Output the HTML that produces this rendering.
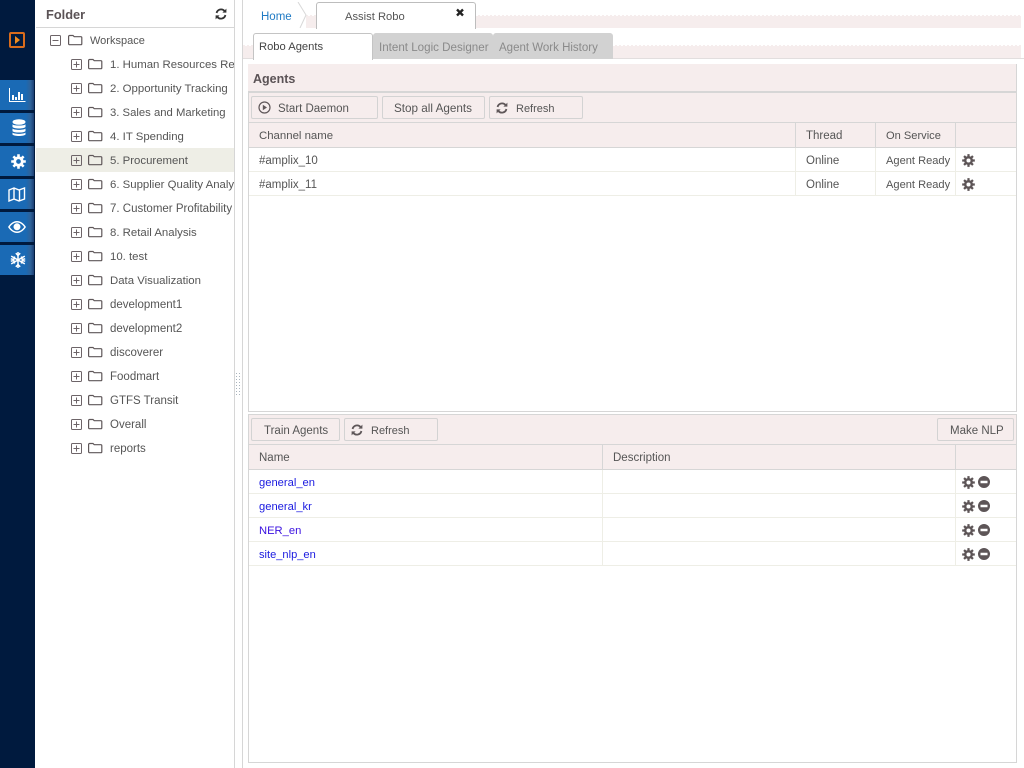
<!DOCTYPE html>
<html><head><meta charset="utf-8"><style>
html,body{margin:0;padding:0;background:#fff}
#r{position:relative;width:1024px;height:768px;overflow:hidden;font-family:"Liberation Sans",sans-serif;font-size:12px;color:#555;background:#fff}
#r div,#r svg,#r span{position:absolute}
.t{white-space:nowrap;line-height:16px;margin-top:1px}
.b{background:#f6eded;border:1px solid #d3d3d3;border-radius:2px;box-sizing:border-box;height:23px}
.nav{left:0;width:34px;height:30px;background:linear-gradient(90deg,#1a6ab5 0,#1a6ab5 76%,#2f6299 90%,#1c3f73 100%)}
.l{background:#eeeee6}
.a{color:#1a1ae0}
.tr .t{font-size:11.4px}
.tr svg[width="11"]{margin-left:1px}
.d{height:1px;background:repeating-linear-gradient(90deg,#f6eded 0 2px,transparent 2px 4px)}
</style></head><body><div id="r">
<svg width="0" height="0" style="position:absolute">
<defs>
<symbol id="g" viewBox="0 0 14 14"><circle cx="7" cy="7" r="3.500" fill="none" stroke="currentColor" stroke-width="2.600"/><path fill="none" stroke="currentColor" stroke-width="2.400" d="M7 .2v3M7 10.800v3M.2 7h3M10.800 7h3M2.200 2.200l2.200 2.200M9.600 9.600l2.200 2.200M11.800 2.200L9.600 4.400M4.400 9.600l-2.200 2.200"/></symbol>
<symbol id="m" viewBox="0 0 12 12"><path fill="#5d5557" fill-rule="evenodd" d="M6 0a6 6 0 1 1 0 12A6 6 0 0 1 6 0zM2.500 4.800v2.400h7V4.800z"/></symbol>
<symbol id="re" viewBox="0 0 12 12"><path fill="none" stroke="currentColor" stroke-width="1.800" d="M1.600 5A4.600 4.600 0 0 1 9.600 3M10.400 7A4.600 4.600 0 0 1 2.400 9"/><path fill="currentColor" d="M11.400.6v4H7.400zM.6 11.400v-4h4z"/></symbol>
<symbol id="plus" viewBox="0 0 11 11"><rect x=".5" y=".5" width="10" height="10" rx="1" fill="none" stroke="#6d6468"/><path d="M2.500 5.500h6M5.500 2.500v6" stroke="#6d6468"/></symbol>
<symbol id="minus" viewBox="0 0 11 11"><rect x=".5" y=".5" width="10" height="10" rx="1" fill="none" stroke="#6d6468"/><path d="M2.500 5.500h6" stroke="#6d6468"/></symbol>
<symbol id="f" viewBox="0 0 15 12"><path fill="none" stroke="#5f5759" stroke-width="1.200" d="M1.600 1.500h3.400l1.200 1.200h6.600a1 1 0 0 1 1 1v6a1 1 0 0 1-1 1H1.600a1 1 0 0 1-1-1V2.500a1 1 0 0 1 1-1z"/></symbol>
</defs></svg>

<!-- left rail -->
<div style="left:0;top:0;width:35px;height:768px;background:#001a3e"></div>
<div style="left:9px;top:32px;width:16px;height:16px;box-sizing:border-box;border:2px solid #d96c1c;border-radius:2px"></div>
<svg style="left:15px;top:36px" width="6" height="8"><path d="M0 0l5 4-5 4z" fill="#ef8a1e"/></svg>
<div class="nav" style="top:80px"></div>
<div class="nav" style="top:113px"></div>
<div class="nav" style="top:146px"></div>
<div class="nav" style="top:179px"></div>
<div class="nav" style="top:212px"></div>
<div class="nav" style="top:245px"></div>
<svg style="left:9px;top:88px" width="17" height="14"><path d="M.5 0v13.500H16.500" fill="none" stroke="#fff"/><path d="M3 7h2v5H3zM6 9h2v3H6zM9 4h2v8H9zM12 6h2v6h-2z" fill="#fff"/></svg>
<svg style="left:12px;top:119px" width="14" height="18"><g fill="#fff"><ellipse cx="7" cy="3" rx="6.500" ry="2.800"/><path d="M.5 5.200C2 7 12 7 13.500 5.200V8C12 10 2 10 .5 8zM.5 9.500C2 11.300 12 11.300 13.500 9.500v2.600C12 14 2 14 .5 12.100zM.5 13.500C2 15.300 12 15.300 13.500 13.500V15.500C12 17.500 2 17.500.5 15.500z"/></g></svg>
<svg style="left:11px;top:154px;color:#fff" width="15" height="15"><use href="#g" width="15" height="15"/></svg>
<svg style="left:8px;top:187px" width="18" height="15"><path d="M1 3l5-2 5 2 5.500-2v11l-5.500 2-5-2-5 2zM6 1v11M11.500 3v11" fill="none" stroke="#fff" stroke-width="1.400"/></svg>
<svg style="left:8px;top:221px" width="18" height="12"><path fill="#fff" fill-rule="evenodd" d="M9 0c4 0 7 3 9 6-2 3-5 6-9 6s-7-3-9-6c2-3 5-6 9-6zM9 1.500C6 1.500 3.500 3.500 1.800 6 3.500 8.500 6 10.500 9 10.500s5.500-2 7.200-4.500C14.500 3.500 12 1.500 9 1.500z"/><circle cx="9" cy="5.800" r="3.500" fill="#fff"/></svg>
<svg style="left:10px;top:252px" width="16" height="16"><g stroke="#fff" stroke-width="1.500" fill="none"><path d="M8 0v16M1.200 4.100l13.600 7.800M14.800 4.100L1.200 11.900"/><path d="M5.800 1.200L8 3.400l2.200-2.200M5.800 14.800L8 12.600l2.200 2.200M.8 6.800l3 .7.800-3M15.200 6.800l-3 .7-.8-3M.8 9.200l3-.7.800 3M15.200 9.200l-3-.7-.8 3"/></g></svg>

<!-- folder panel -->
<div style="left:234px;top:0;width:1px;height:768px;background:#d6d6d6"></div>
<div style="left:36px;top:27px;width:198px;height:1px;background:#d6d6d6"></div>
<div class="t" style="left:46px;top:6px;font-weight:bold;font-size:12.800px;color:#5b5356">Folder</div>
<svg style="left:215px;top:8px;color:#333" width="12" height="12"><use href="#re" width="12" height="12"/></svg>
<div style="left:36px;top:148px;width:198px;height:24px;background:#eeeee6"></div>

<svg style="left:50px;top:35px" width="11" height="11"><use href="#minus" width="11" height="11"/></svg>
<svg style="left:68px;top:34px" width="15" height="12"><use href="#f" width="15" height="12"/></svg>
<div class="t" style="left:90px;top:32px;font-size:11px">Workspace</div>

<div class="tr" style="left:70px;top:52px;width:164px;height:408px;overflow:hidden">
<svg style="left:0;top:7px" width="11" height="11"><use href="#plus" width="11" height="11"/></svg><svg style="left:18px;top:6px" width="15" height="12"><use href="#f" width="15" height="12"/></svg><div class="t" style="left:40px;top:4px">1. Human Resources Report</div>
<svg style="left:0;top:31px" width="11" height="11"><use href="#plus" width="11" height="11"/></svg><svg style="left:18px;top:30px" width="15" height="12"><use href="#f" width="15" height="12"/></svg><div class="t" style="left:40px;top:28px">2. Opportunity Tracking</div>
<svg style="left:0;top:55px" width="11" height="11"><use href="#plus" width="11" height="11"/></svg><svg style="left:18px;top:54px" width="15" height="12"><use href="#f" width="15" height="12"/></svg><div class="t" style="left:40px;top:52px;font-size:11.300px">3. Sales and Marketing</div>
<svg style="left:0;top:79px" width="11" height="11"><use href="#plus" width="11" height="11"/></svg><svg style="left:18px;top:78px" width="15" height="12"><use href="#f" width="15" height="12"/></svg><div class="t" style="left:40px;top:76px">4. IT Spending</div>
<svg style="left:0;top:103px" width="11" height="11"><use href="#plus" width="11" height="11"/></svg><svg style="left:18px;top:102px" width="15" height="12"><use href="#f" width="15" height="12"/></svg><div class="t" style="left:40px;top:100px">5. Procurement</div>
<svg style="left:0;top:127px" width="11" height="11"><use href="#plus" width="11" height="11"/></svg><svg style="left:18px;top:126px" width="15" height="12"><use href="#f" width="15" height="12"/></svg><div class="t" style="left:40px;top:124px">6. Supplier Quality Analysis</div>
<svg style="left:0;top:151px" width="11" height="11"><use href="#plus" width="11" height="11"/></svg><svg style="left:18px;top:150px" width="15" height="12"><use href="#f" width="15" height="12"/></svg><div class="t" style="left:40px;top:148px;font-size:11.500px">7. Customer Profitability</div>
<svg style="left:0;top:175px" width="11" height="11"><use href="#plus" width="11" height="11"/></svg><svg style="left:18px;top:174px" width="15" height="12"><use href="#f" width="15" height="12"/></svg><div class="t" style="left:40px;top:172px">8. Retail Analysis</div>
<svg style="left:0;top:199px" width="11" height="11"><use href="#plus" width="11" height="11"/></svg><svg style="left:18px;top:198px" width="15" height="12"><use href="#f" width="15" height="12"/></svg><div class="t" style="left:40px;top:196px">10. test</div>
<svg style="left:0;top:223px" width="11" height="11"><use href="#plus" width="11" height="11"/></svg><svg style="left:18px;top:222px" width="15" height="12"><use href="#f" width="15" height="12"/></svg><div class="t" style="left:40px;top:220px">Data Visualization</div>
<svg style="left:0;top:247px" width="11" height="11"><use href="#plus" width="11" height="11"/></svg><svg style="left:18px;top:246px" width="15" height="12"><use href="#f" width="15" height="12"/></svg><div class="t" style="left:40px;top:244px;font-size:11.500px">development1</div>
<svg style="left:0;top:271px" width="11" height="11"><use href="#plus" width="11" height="11"/></svg><svg style="left:18px;top:270px" width="15" height="12"><use href="#f" width="15" height="12"/></svg><div class="t" style="left:40px;top:268px;font-size:11.500px">development2</div>
<svg style="left:0;top:295px" width="11" height="11"><use href="#plus" width="11" height="11"/></svg><svg style="left:18px;top:294px" width="15" height="12"><use href="#f" width="15" height="12"/></svg><div class="t" style="left:40px;top:292px;font-size:11.500px">discoverer</div>
<svg style="left:0;top:319px" width="11" height="11"><use href="#plus" width="11" height="11"/></svg><svg style="left:18px;top:318px" width="15" height="12"><use href="#f" width="15" height="12"/></svg><div class="t" style="left:40px;top:316px;font-size:11.500px">Foodmart</div>
<svg style="left:0;top:343px" width="11" height="11"><use href="#plus" width="11" height="11"/></svg><svg style="left:18px;top:342px" width="15" height="12"><use href="#f" width="15" height="12"/></svg><div class="t" style="left:40px;top:340px;font-size:11.500px">GTFS Transit</div>
<svg style="left:0;top:367px" width="11" height="11"><use href="#plus" width="11" height="11"/></svg><svg style="left:18px;top:366px" width="15" height="12"><use href="#f" width="15" height="12"/></svg><div class="t" style="left:40px;top:364px;font-size:11.500px">Overall</div>
<svg style="left:0;top:391px" width="11" height="11"><use href="#plus" width="11" height="11"/></svg><svg style="left:18px;top:390px" width="15" height="12"><use href="#f" width="15" height="12"/></svg><div class="t" style="left:40px;top:388px;font-size:11.500px">reports</div>
</div>

<!-- splitter -->
<div style="left:242px;top:0;width:1px;height:768px;background:#d6d6d6"></div>
<svg style="left:236px;top:373px" width="5" height="24"><g fill="#a9b4bd"><rect x="0" y="0" width="1" height="1"/><rect x="3" y="0" width="1" height="1"/><rect x="0" y="3" width="1" height="1"/><rect x="3" y="3" width="1" height="1"/><rect x="0" y="6" width="1" height="1"/><rect x="3" y="6" width="1" height="1"/><rect x="0" y="9" width="1" height="1"/><rect x="3" y="9" width="1" height="1"/><rect x="0" y="12" width="1" height="1"/><rect x="3" y="12" width="1" height="1"/><rect x="0" y="15" width="1" height="1"/><rect x="3" y="15" width="1" height="1"/><rect x="0" y="18" width="1" height="1"/><rect x="3" y="18" width="1" height="1"/><rect x="0" y="21" width="1" height="1"/><rect x="3" y="21" width="1" height="1"/></g></svg>

<!-- top tab bands -->
<div class="d" style="left:306px;top:15px;width:715px"></div>
<div class="d" style="left:243px;top:45px;width:778px"></div>
<div style="left:306px;top:16px;width:715px;height:12px;background:#f6eded"></div>
<div style="left:243px;top:46px;width:778px;height:12px;background:#f6eded"></div>
<div style="left:243px;top:58px;width:781px;height:1px;background:#e2dede"></div>

<!-- breadcrumb -->
<div class="t" style="left:261px;top:8px;color:#1f7ac4;font-size:11.500px">Home</div>
<svg style="left:297px;top:2px" width="10" height="26"><path d="M1 0l8 13-6 13" fill="none" stroke="#d8d8d8"/></svg>
<div style="left:316px;top:2px;width:160px;height:27px;background:#fff;border:1px solid #bdbdbd;border-bottom:0;border-radius:3px 3px 0 0;box-sizing:border-box"></div>
<div class="t" style="left:345px;top:8px;color:#555;font-size:11.200px">Assist Robo</div>
<svg style="left:455px;top:8px" width="10" height="10"><path d="M2 1.500l6 6M8 1.500l-6 6" stroke="#222" stroke-width="2.400"/></svg>

<!-- sub tabs -->
<div style="left:373px;top:33px;width:120px;height:26px;background:#d2d2d2;border-radius:3px 3px 0 0"></div>
<div style="left:493px;top:33px;width:120px;height:26px;background:#d2d2d2;border-radius:3px 3px 0 0"></div>
<div style="left:253px;top:33px;width:120px;height:27px;background:#fff;border:1px solid #c4c4c4;border-bottom:0;border-radius:3px 3px 0 0;box-sizing:border-box"></div>
<div class="t" style="left:259px;top:38px;color:#444;font-size:11.200px">Robo Agents</div>
<div class="t" style="left:379px;top:39px;color:#8a8a8a;font-size:11.600px">Intent Logic Designer</div>
<div class="t" style="left:499px;top:39px;color:#8a8a8a;font-size:11.500px">Agent Work History</div>

<!-- Agents panel -->
<div style="left:248px;top:64px;width:769px;height:348px;border-right:1px solid #d6d6d6;border-left:1px solid #d6d6d6;border-bottom:1px solid #d6d6d6;box-sizing:border-box"></div>
<div style="left:248px;top:64px;width:768px;height:28px;background:#f6eded"></div>
<div style="left:248px;top:91px;width:768px;height:2px;background:#d6d6d6"></div>
<div class="t" style="left:253px;top:70px;font-weight:bold;font-size:12.500px;color:#5b5356">Agents</div>
<div style="left:249px;top:93px;width:767px;height:29px;background:#f6eded"></div>
<div style="left:249px;top:122px;width:767px;height:1px;background:#d6d6d6"></div>

<div class="b" style="left:251px;top:96px;width:127px"></div>
<svg style="left:258px;top:101px" width="13" height="13"><circle cx="6.500" cy="6.500" r="5.500" fill="none" stroke="#5f5759" stroke-width="1.200"/><path d="M4.800 3.800l4.200 2.700-4.200 2.700z" fill="#5f5759"/></svg>
<div class="t" style="left:278px;top:100px;font-size:11.500px;color:#555">Start Daemon</div>
<div class="b" style="left:382px;top:96px;width:103px"></div>
<div class="t" style="left:394px;top:100px;font-size:11.700px;color:#555">Stop all Agents</div>
<div class="b" style="left:489px;top:96px;width:94px"></div>
<svg style="left:496px;top:102px;color:#5f5759" width="12" height="12"><use href="#re" width="12" height="12"/></svg>
<div class="t" style="left:516px;top:100px;font-size:11px;color:#555">Refresh</div>

<!-- agents table -->
<div style="left:249px;top:123px;width:767px;height:25px;background:#f6eded"></div>
<div style="left:249px;top:147px;width:767px;height:1px;background:#d6d6d6"></div>
<div style="left:795px;top:123px;width:1px;height:25px;background:#d6d6d6"></div>
<div style="left:875px;top:123px;width:1px;height:25px;background:#d6d6d6"></div>
<div style="left:955px;top:123px;width:1px;height:25px;background:#d6d6d6"></div>
<div class="t" style="left:259px;top:127px;font-size:11.400px">Channel name</div>
<div class="t" style="left:806px;top:127px;font-size:11.500px">Thread</div>
<div class="t" style="left:886px;top:127px;font-size:11.100px">On Service</div>
<div class="l" style="left:249px;top:171px;width:767px;height:1px"></div>
<div class="l" style="left:249px;top:195px;width:767px;height:1px"></div>
<div class="l" style="left:795px;top:148px;width:1px;height:48px"></div>
<div class="l" style="left:875px;top:148px;width:1px;height:48px"></div>
<div class="l" style="left:955px;top:148px;width:1px;height:48px"></div>
<div class="t" style="left:259px;top:152px;font-size:11.500px">#amplix_10</div>
<div class="t" style="left:806px;top:152px;font-size:11.500px">Online</div>
<div class="t" style="left:886px;top:152px;font-size:11.100px">Agent Ready</div>
<div class="t" style="left:259px;top:176px;font-size:11.500px">#amplix_11</div>
<div class="t" style="left:806px;top:176px;font-size:11.500px">Online</div>
<div class="t" style="left:886px;top:176px;font-size:11.100px">Agent Ready</div>
<svg style="left:962px;top:154px;color:#5d5557" width="13" height="13"><use href="#g" width="13" height="13"/></svg>
<svg style="left:962px;top:178px;color:#5d5557" width="13" height="13"><use href="#g" width="13" height="13"/></svg>

<!-- second panel -->
<div style="left:248px;top:414px;width:769px;height:349px;border:1px solid #d6d6d6;box-sizing:border-box"></div>
<div style="left:249px;top:415px;width:767px;height:29px;background:#f6eded"></div>
<div style="left:249px;top:444px;width:767px;height:1px;background:#d6d6d6"></div>
<div class="b" style="left:251px;top:418px;width:89px"></div>
<div class="t" style="left:264px;top:422px;font-size:11.500px;color:#555">Train Agents</div>
<div class="b" style="left:344px;top:418px;width:94px"></div>
<svg style="left:351px;top:424px;color:#5f5759" width="12" height="12"><use href="#re" width="12" height="12"/></svg>
<div class="t" style="left:371px;top:422px;font-size:11px;color:#555">Refresh</div>
<div class="b" style="left:937px;top:418px;width:77px"></div>
<div class="t" style="left:950px;top:422px;font-size:11.500px;color:#555">Make NLP</div>

<div style="left:249px;top:445px;width:767px;height:25px;background:#f6eded"></div>
<div style="left:249px;top:469px;width:767px;height:1px;background:#d6d6d6"></div>
<div style="left:602px;top:445px;width:1px;height:25px;background:#d6d6d6"></div>
<div style="left:955px;top:445px;width:1px;height:25px;background:#d6d6d6"></div>
<div class="t" style="left:259px;top:449px;font-size:11.500px">Name</div>
<div class="t" style="left:613px;top:449px;font-size:11.500px">Description</div>
<div class="l" style="left:249px;top:493px;width:767px;height:1px"></div>
<div class="l" style="left:249px;top:517px;width:767px;height:1px"></div>
<div class="l" style="left:249px;top:541px;width:767px;height:1px"></div>
<div class="l" style="left:249px;top:565px;width:767px;height:1px"></div>
<div class="l" style="left:602px;top:470px;width:1px;height:96px"></div>
<div class="l" style="left:955px;top:470px;width:1px;height:96px"></div>
<div class="t a" style="left:259px;top:474px;font-size:11.200px">general_en</div>
<div class="t a" style="left:259px;top:498px;font-size:11.200px">general_kr</div>
<div class="t a" style="left:259px;top:522px;font-size:11.200px;color:#3a10e0">NER_en</div>
<div class="t a" style="left:259px;top:546px;font-size:11.100px">site_nlp_en</div>
<svg style="left:962px;top:476px;color:#5d5557" width="13" height="13"><use href="#g" width="13" height="13"/></svg>
<svg style="left:978px;top:476px" width="12" height="12"><use href="#m" width="12" height="12"/></svg>
<svg style="left:962px;top:500px;color:#5d5557" width="13" height="13"><use href="#g" width="13" height="13"/></svg>
<svg style="left:978px;top:500px" width="12" height="12"><use href="#m" width="12" height="12"/></svg>
<svg style="left:962px;top:524px;color:#5d5557" width="13" height="13"><use href="#g" width="13" height="13"/></svg>
<svg style="left:978px;top:524px" width="12" height="12"><use href="#m" width="12" height="12"/></svg>
<svg style="left:962px;top:548px;color:#5d5557" width="13" height="13"><use href="#g" width="13" height="13"/></svg>
<svg style="left:978px;top:548px" width="12" height="12"><use href="#m" width="12" height="12"/></svg>
</div></body></html>
